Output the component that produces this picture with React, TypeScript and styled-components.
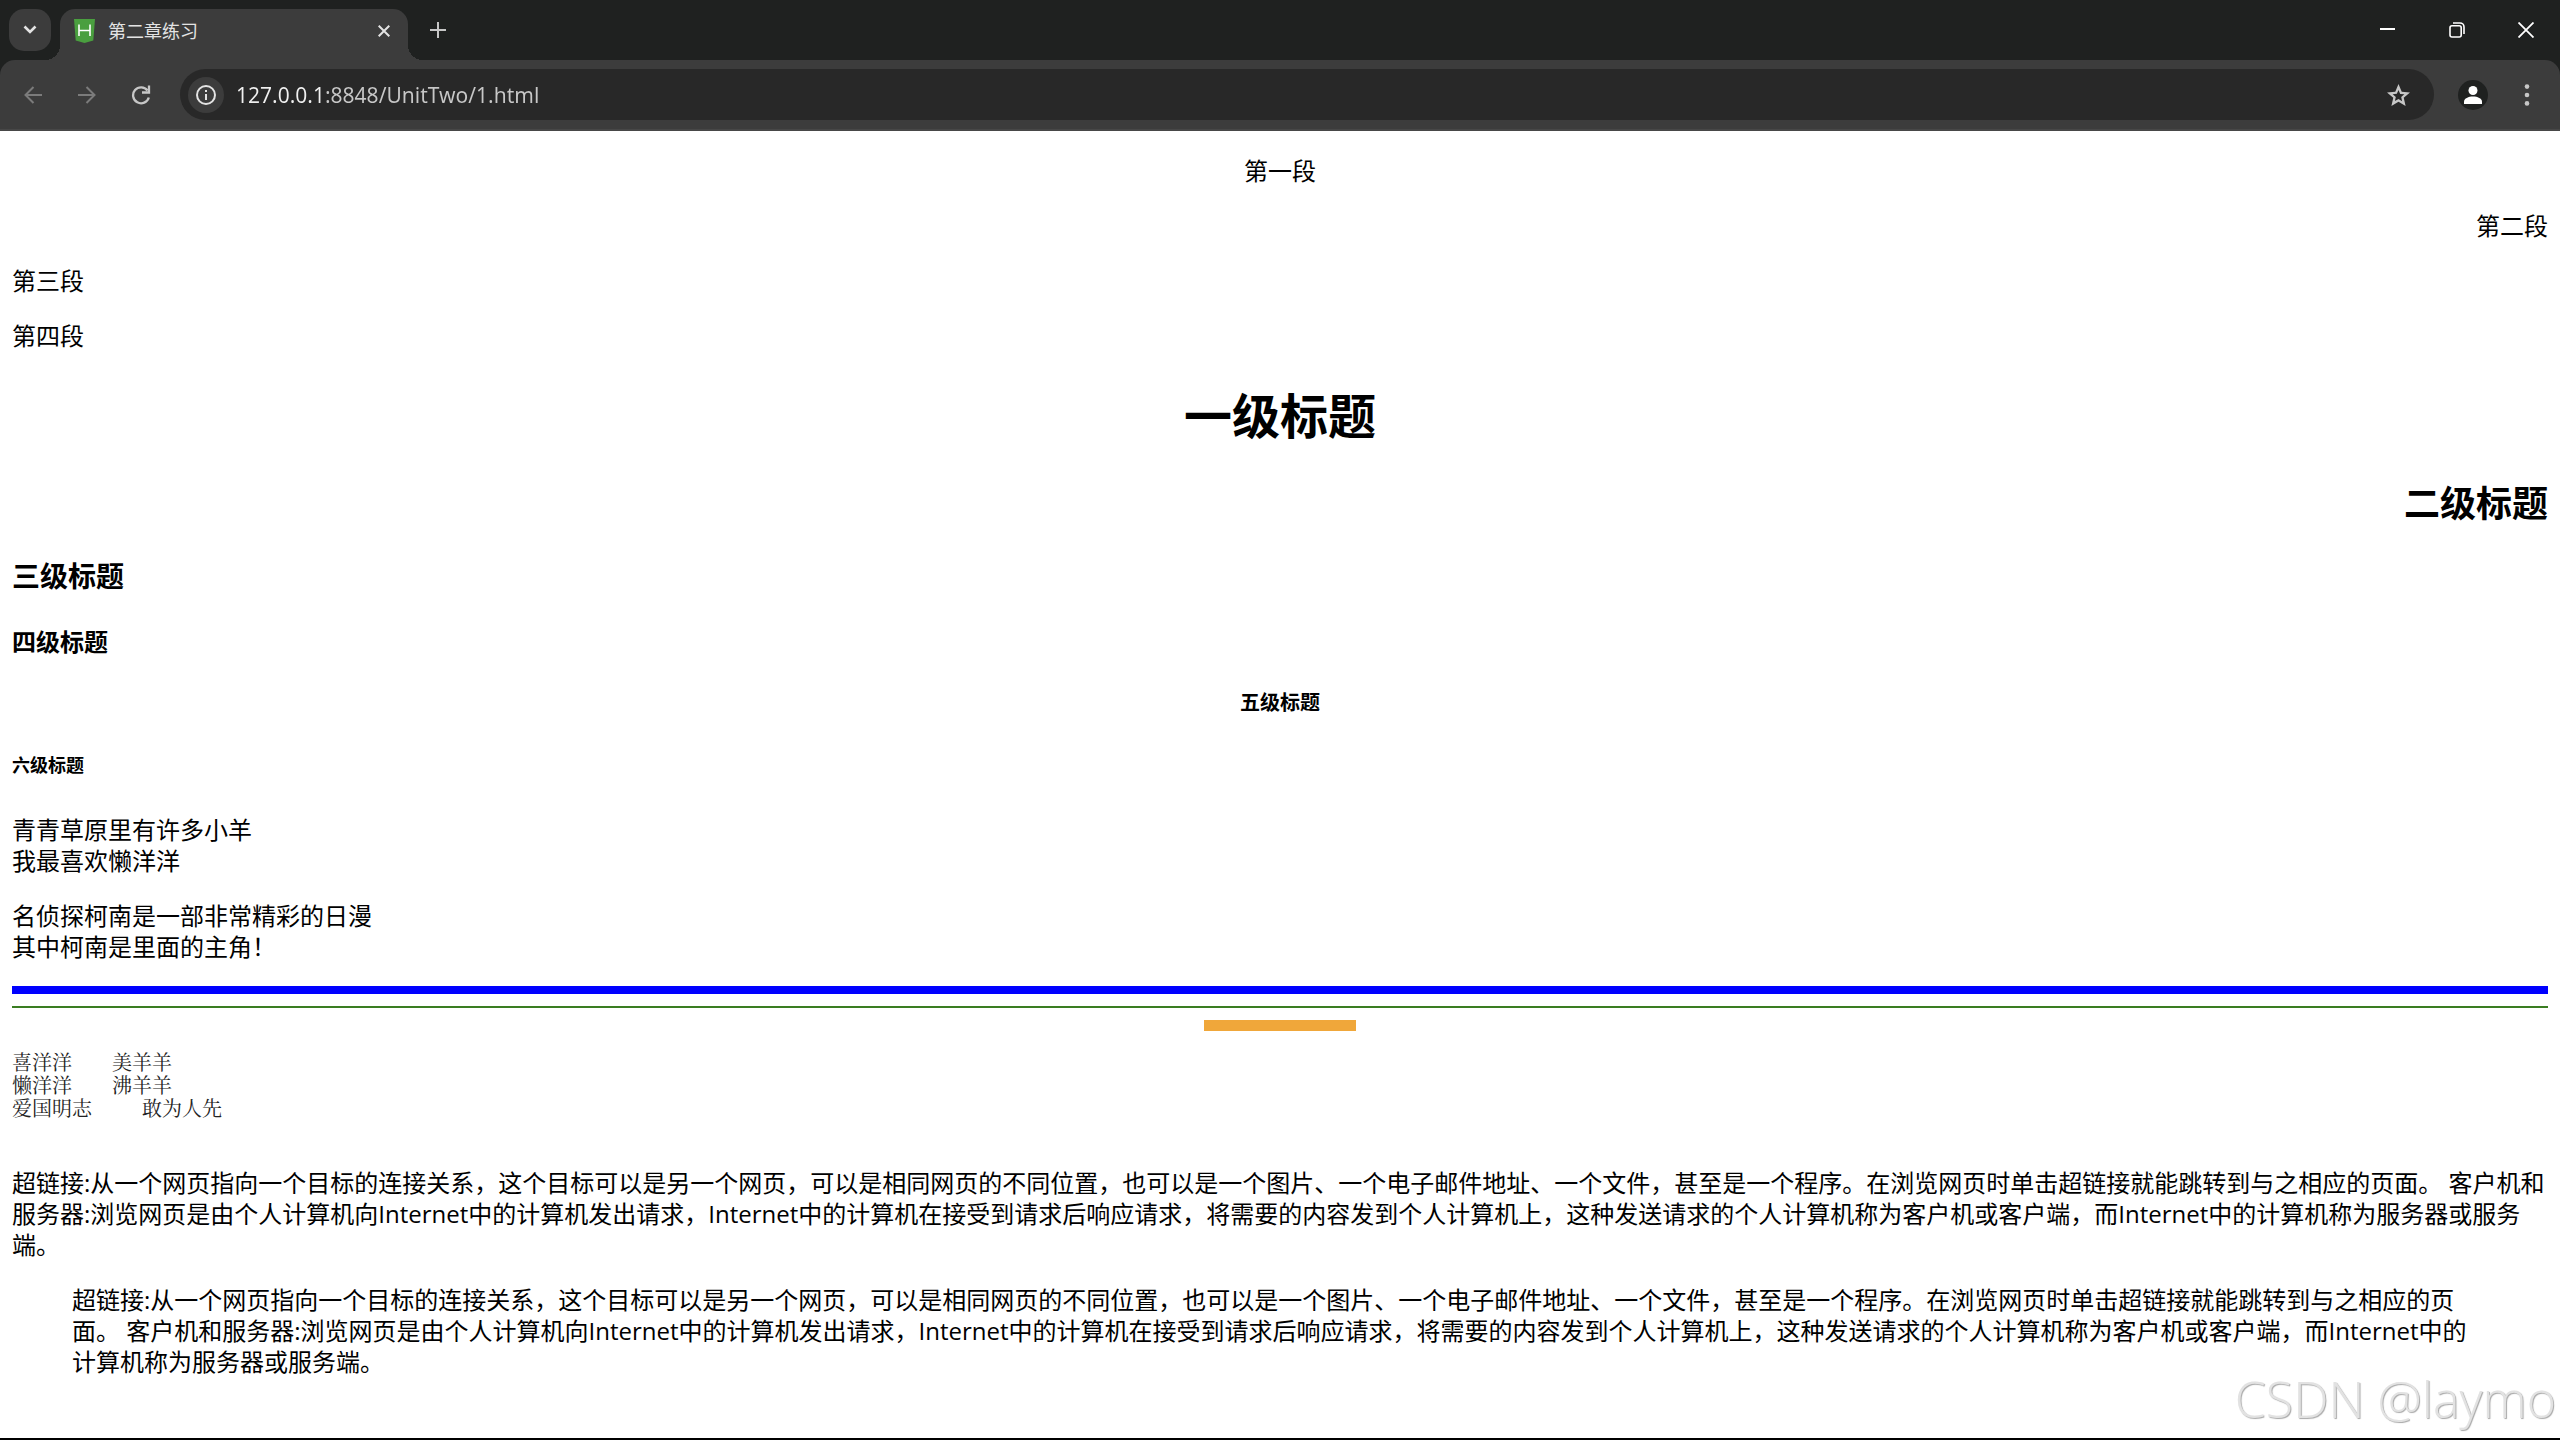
import React from "react";
import styled, { createGlobalStyle, css } from "styled-components";

const sans = `"Open Sans", "Noto Sans CJK SC", sans-serif`;
const chromeFont = `"Noto Sans", "Noto Sans CJK SC", sans-serif`;

const GlobalStyle = createGlobalStyle`
  *, *::before, *::after { box-sizing: border-box; }
  html, body, #root { height: 100%; }
  body { margin: 0; background: #fff; }
  button, input { font: inherit; color: inherit; border: 0; padding: 0; background: none; outline: none; }
`;

const Window = styled.div`
  display: flex;
  flex-direction: column;
  min-height: 100vh;
  background: #fff;
  border-bottom: 2px solid #000;
`;

const TabStrip = styled.header`
  display: flex;
  align-items: flex-start;
  height: 60px;
  padding: 9px 0 0 9px;
  background: #1f2120;
`;

const TabSearch = styled.button`
  display: grid;
  place-items: center;
  width: 42px;
  height: 42px;
  margin-right: 9px;
  border-radius: 15px;
  background: #3c3c3c;
`;

const Tab = styled.div`
  position: relative;
  display: flex;
  align-items: center;
  width: 348px;
  height: 51px;
  padding: 0 12px 8px 14px;
  border-radius: 15px 15px 0 0;
  background: #3c3c3c;
  color: #e3e3e3;
  font: 18px/24px ${chromeFont};

  &::before, &::after {
    content: "";
    position: absolute;
    bottom: 0;
    width: 15px;
    height: 15px;
  }
  &::before {
    right: 100%;
    background: radial-gradient(circle at 0 0, transparent 15px, #3c3c3c 15px);
  }
  &::after {
    left: 100%;
    background: radial-gradient(circle at 100% 0, transparent 15px, #3c3c3c 15px);
  }
`;

const TabTitle = styled.span`
  flex: 1;
  padding-left: 13px;
`;

const IconButton = styled.button<{ $w: number; $h?: number; $color?: string }>`
  display: grid;
  place-items: center;
  flex: none;
  width: ${(p) => p.$w}px;
  height: ${(p) => p.$h ?? p.$w}px;
  color: ${(p) => p.$color ?? "#c7c7c7"};
`;

const WindowControls = styled.div`
  display: flex;
  margin-left: auto;
`;

const ToolbarBack = styled.div`
  background: #1f2120;
`;

const Toolbar = styled.nav`
  display: flex;
  align-items: center;
  height: 71px;
  padding: 0 6px;
  border-bottom: 2px solid #474747;
  border-radius: 15px 15px 0 0;
  background: #3c3c3c;
`;

const AddressBar = styled.div`
  display: flex;
  flex: 1;
  align-items: center;
  height: 51px;
  margin: 0 12px;
  padding: 0 9px 0 8px;
  border-radius: 26px;
  background: #282828;
`;

const SiteInfo = styled.button`
  display: grid;
  place-items: center;
  width: 36px;
  height: 36px;
  border-radius: 50%;
  background: #3c3c3c;
`;

const UrlField = styled.label`
  flex: 1;
  padding-left: 12px;
  color: #e3e3e3;
  font: 21px/28px ${chromeFont};
`;

/* The host name is drawn brighter than the port and path after it. */
const UrlInput = styled.input`
  display: block;
  width: 100%;
  height: 28px;
  background: linear-gradient(90deg, #f0f0f0 89px, #c7c7c7 89px);
  background-clip: text;
  -webkit-text-fill-color: transparent;
`;

const Avatar = styled.span`
  display: grid;
  place-items: center;
  width: 30px;
  height: 30px;
  border-radius: 50%;
  background: #1f2120;
`;

const Page = styled.main`
  display: flow-root;
  flex: 1;
  padding: 0 12px;
  color: #000;
  font: 24px/31px ${sans};
`;

type Align = "left" | "center" | "right";

const Paragraph = styled.p<{ $align?: Align }>`
  margin: 24px 0;
  text-align: ${(p) => p.$align ?? "left"};
`;

const headingSizes = {
  1: css`font-size: 48px; line-height: 65px; margin: 32px 0;`,
  2: css`font-size: 36px; line-height: 48px; margin: 30px 0;`,
  3: css`font-size: 28px; line-height: 37px; margin: 28px 0;`,
  4: css`font-size: 24px; line-height: 31px; margin: 31px 0;`,
  5: css`font-size: 20px; line-height: 26px; margin: 33px 0;`,
  6: css`font-size: 18px; line-height: 24px; margin: 37px 0;`,
};

const Heading = styled.h1<{ $level: keyof typeof headingSizes; $align?: Align }>`
  font-weight: 700;
  text-align: ${(p) => p.$align ?? "left"};
  ${(p) => headingSizes[p.$level]}
`;

const Rule = styled.hr<{ $color: string; $size: number; $width?: string }>`
  width: ${(p) => p.$width ?? "100%"};
  height: ${(p) => p.$size}px;
  margin: 12px auto;
  border: 0;
  background: ${(p) => p.$color};
`;

const Preformatted = styled.pre`
  margin: 19px 0 48px;
  color: #222;
  font: 20px/23px "Noto Serif CJK SC", "Noto Sans CJK SC", serif;
`;

const Quote = styled.blockquote`
  margin: 24px 60px;
`;

const Watermark = styled.div`
  position: fixed;
  right: 4px;
  bottom: 16px;
  color: #e2e2e2;
  font: 300 50px/50px ${sans};
  text-shadow: 1px 1px 1px #a8a8a8;
`;

const passage =
  "超链接:从一个网页指向一个目标的连接关系，这个目标可以是另一个网页，可以是相同网页的不同位置，也可以是一个图片、一个电子邮件地址、一个文件，甚至是一个程序。在浏览网页时单击超链接就能跳转到与之相应的页面。 客户机和服务器:浏览网页是由个人计算机向Internet中的计算机发出请求，Internet中的计算机在接受到请求后响应请求，将需要的内容发到个人计算机上，这种发送请求的个人计算机称为客户机或客户端，而Internet中的计算机称为服务器或服务端。";

const verse = "喜洋洋\u3000\u3000美羊羊\n懒洋洋\u3000\u3000沸羊羊\n爱国明志\u3000\u3000\u2002敢为人先";

const stroke = { fill: "none", stroke: "currentColor" } as const;

function BrowserTabs() {
  return (
    <TabStrip>
      <TabSearch aria-label="搜索标签页">
        <svg width="14" height="10" viewBox="0 0 14 10" {...stroke} strokeWidth="2.6" color="#e3e3e3">
          <path d="M1.5 1.5 7 7l5.5-5.5" />
        </svg>
      </TabSearch>
      <Tab>
        <svg width="21" height="24" viewBox="0 0 21 24">
          <path d="M0 0h21l-1.700 21.400L10.500 24l-8.800-2.600z" fill="#4a9f3f" />
          <path d="M5 5.500v11.500M16 5.500v11.500M5 11.500h11" fill="none" stroke="#fff" strokeWidth="1.600" />
        </svg>
        <TabTitle>第二章练习</TabTitle>
        <IconButton $w={24} $color="#e3e3e3" aria-label="关闭标签页">
          <svg width="12" height="12" viewBox="0 0 12 12" {...stroke} strokeWidth="2">
            <path d="m.7.700 10.600 10.600M11.300.700.700 11.300" />
          </svg>
        </IconButton>
      </Tab>
      <IconButton $w={60} $h={42} aria-label="打开新的标签页">
        <svg width="16" height="16" viewBox="0 0 16 16" {...stroke} strokeWidth="2">
          <path d="M8 0v16M0 8h16" />
        </svg>
      </IconButton>
      <WindowControls>
        <IconButton $w={69} $h={42} $color="#fff" aria-label="最小化">
          <svg width="15" height="16" viewBox="0 0 15 16" {...stroke} strokeWidth="2">
            <path d="M0 7h15" />
          </svg>
        </IconButton>
        <IconButton $w={69} $h={42} $color="#fff" aria-label="还原">
          <svg width="16" height="16" viewBox="0 0 16 16" {...stroke} strokeWidth="1.600">
            <rect x="1" y="3.800" width="11.200" height="11.200" rx="2" />
            <path d="M4 1h7a4 4 0 0 1 4 4v7" />
          </svg>
        </IconButton>
        <IconButton $w={69} $h={42} $color="#fff" aria-label="关闭">
          <svg width="16" height="16" viewBox="0 0 16 16" {...stroke} strokeWidth="1.800">
            <path d="m.5.500 15 15M15.500.500l-15 15" />
          </svg>
        </IconButton>
      </WindowControls>
    </TabStrip>
  );
}

function BrowserToolbar() {
  return (
    <ToolbarBack>
      <Toolbar>
        <IconButton $w={54} $h={42} $color="#7b7b7b" aria-label="后退">
          <svg width="18" height="18" viewBox="0 0 18 18" {...stroke} strokeWidth="2">
            <path d="M18 9H1.500M9.500 1 1.500 9l8 8" />
          </svg>
        </IconButton>
        <IconButton $w={54} $h={42} $color="#7b7b7b" aria-label="前进">
          <svg width="18" height="18" viewBox="0 0 18 18" {...stroke} strokeWidth="2">
            <path d="M0 9h16.500M8.500 1l8 8-8 8" />
          </svg>
        </IconButton>
        <IconButton $w={54} $h={42} aria-label="重新加载">
          <svg width="20" height="20" viewBox="0 0 20 20" {...stroke} strokeWidth="2.300">
            <path d="M17.800 12.500A8 8 0 1 1 16.500 5.500M18 .500v7h-7" />
          </svg>
        </IconButton>
        <AddressBar>
          <SiteInfo aria-label="查看网站信息">
            <svg width="20" height="20" viewBox="0 0 20 20" {...stroke} strokeWidth="2" color="#e3e3e3">
              <circle cx="10" cy="10" r="9" />
              <path d="M10 9v6M10 5v2" />
            </svg>
          </SiteInfo>
          <UrlField>
            <UrlInput aria-label="地址" defaultValue="127.0.0.1:8848/UnitTwo/1.html" />
          </UrlField>
          <IconButton $w={54} $h={42} aria-label="收藏">
            <svg width="23" height="22" viewBox="2 3 20 19" fill="currentColor">
              <path d="m8.850 17.825 3.150-1.900 3.150 1.925-.825-3.600 2.775-2.400-3.650-.325-1.450-3.400-1.450 3.375-3.650.325 2.775 2.425zM5.825 22l1.625-7.025L2 10.250l7.200-.625L12 3l2.800 6.625 7.200.625-5.450 4.725L18.175 22 12 18.275z" />
            </svg>
          </IconButton>
        </AddressBar>
        <IconButton $w={54} $h={42} aria-label="个人资料">
          <Avatar>
            <svg width="18" height="18" viewBox="0 0 18 18" fill="#fff">
              <circle cx="9" cy="4.500" r="4.500" />
              <path d="M0 18v-2.500c0-3 4.500-5 9-5s9 2 9 5V18z" />
            </svg>
          </Avatar>
        </IconButton>
        <IconButton $w={54} $h={42} aria-label="菜单">
          <svg width="6" height="22" viewBox="0 0 6 22" fill="currentColor">
            <circle cx="3" cy="2.600" r="2.300" />
            <circle cx="3" cy="11" r="2.300" />
            <circle cx="3" cy="19.400" r="2.300" />
          </svg>
        </IconButton>
      </Toolbar>
    </ToolbarBack>
  );
}

export default function App() {
  return (
    <Window>
      <GlobalStyle />
      <BrowserTabs />
      <BrowserToolbar />
      <Page lang="zh-CN">
        <Paragraph $align="center">第一段</Paragraph>
        <Paragraph $align="right">第二段</Paragraph>
        <Paragraph>第三段</Paragraph>
        <Paragraph>第四段</Paragraph>
        <Heading $level={1} $align="center">一级标题</Heading>
        <Heading as="h2" $level={2} $align="right">二级标题</Heading>
        <Heading as="h3" $level={3}>三级标题</Heading>
        <Heading as="h4" $level={4}>四级标题</Heading>
        <Heading as="h5" $level={5} $align="center">五级标题</Heading>
        <Heading as="h6" $level={6}>六级标题</Heading>
        <Paragraph>青青草原里有许多小羊<br />我最喜欢懒洋洋</Paragraph>
        <Paragraph>名侦探柯南是一部非常精彩的日漫<br />其中柯南是里面的主角！</Paragraph>
        <Rule $color="#0000ff" $size={8} />
        <Rule $color="#3a7d22" $size={2} />
        <Rule $color="#f0a73a" $size={11} $width="6%" />
        <Preformatted>{verse}</Preformatted>
        <Paragraph>{passage}</Paragraph>
        <Quote>{passage}</Quote>
      </Page>
      <Watermark>CSDN @laymo</Watermark>
    </Window>
  );
}
